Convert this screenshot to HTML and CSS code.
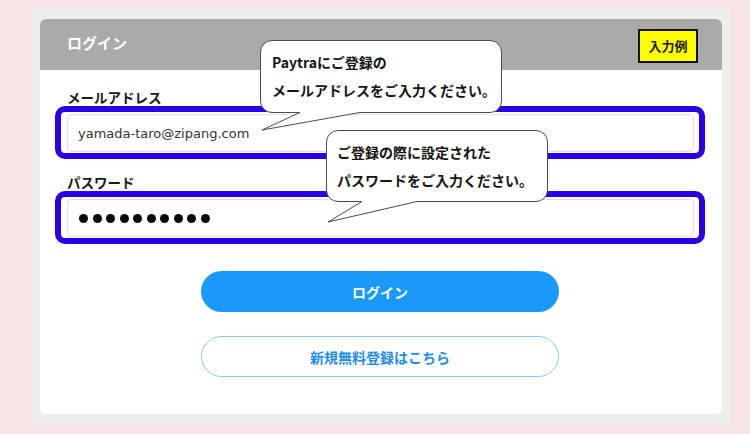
FILE: index.html
```html
<!DOCTYPE html>
<html lang="ja">
<head>
<meta charset="utf-8">
<title>ログイン</title>
<link rel="stylesheet" href="styles.css">
</head>
<body>
<div class="frame">
  <div class="card">
    <div class="card-head">
      <h1 class="title">ログイン</h1>
      <span class="badge">入力例</span>
    </div>
    <div class="card-body">
      <div class="field">
        <div class="label">メールアドレス</div>
        <div class="hl">
          <div class="input"><span class="email">yamada-taro@zipang.com</span></div>
        </div>
      </div>
      <div class="field">
        <div class="label">パスワード</div>
        <div class="hl">
          <div class="input">
            <span class="dots">
              <i class="dot"></i><i class="dot"></i><i class="dot"></i><i class="dot"></i><i class="dot"></i><i class="dot"></i><i class="dot"></i><i class="dot"></i><i class="dot"></i><i class="dot"></i>
            </span>
          </div>
        </div>
      </div>
      <div class="actions">
        <div class="btn btn-primary">ログイン</div>
        <div class="btn btn-outline">新規無料登録はこちら</div>
      </div>
    </div>

    <div class="bubble bubble-mail">
      <p class="bubble-text">Paytraにご登録の<br>メールアドレスをご入力ください。</p>
      <svg class="tail" width="242" height="100" viewBox="0 0 242 100">
        <polygon points="40,69.5 100,69.5 100,72.5 2,90 40,72.5" fill="#fff"/>
        <polyline points="40,72.5 2,90 100,72.5" fill="none" stroke="#4a4a4a" stroke-width="1"/>
      </svg>
    </div>

    <div class="bubble bubble-pass">
      <p class="bubble-text">ご登録の際に設定された<br>パスワードをご入力ください。</p>
      <svg class="tail" width="222" height="100" viewBox="0 0 222 100">
        <polygon points="36,68.5 91,68.5 91,71.5 2,92 36,71.5" fill="#fff"/>
        <polyline points="36,71.5 2,92 91,71.5" fill="none" stroke="#4a4a4a" stroke-width="1"/>
      </svg>
    </div>
  </div>
</div>
</body>
</html>
```

FILE: styles.css
```css
* { box-sizing: border-box; }

html, body {
  margin: 0;
  padding: 0;
}

body {
  width: 750px;
  height: 434px;
  background: #f7e4e4;
  font-family: "Noto Sans CJK JP", "Noto Sans", sans-serif;
  color: #222;
  overflow: hidden;
  padding: 8px 19px 9px 32px;
}

.frame {
  width: 699px;
  height: 417px;
  background: #eeeeee;
  padding: 11px 9px 11px 8px;
}

.card {
  position: relative;
  width: 682px;
  height: 395px;
  background: #ffffff;
  border-radius: 6px;
}

.card-head {
  height: 51px;
  background: #aaaaaa;
  border-radius: 6px 6px 0 0;
  display: flex;
  align-items: flex-start;
  justify-content: space-between;
  padding: 0 24px 0 27px;
}

.title {
  margin: 0;
  font-size: 15px;
  font-weight: 700;
  line-height: 20px;
  color: #ffffff;
  padding-top: 14px;
}

.badge {
  margin-top: 10px;
  width: 60px;
  height: 34px;
  background: #ffff00;
  border: 2px solid #111;
  font-size: 13px;
  font-weight: 700;
  line-height: 30px;
  text-align: center;
  color: #222;
}

.card-body {
  padding: 18px 17px 0 15px;
  display: flex;
  flex-direction: column;
}

.field {
  display: flex;
  flex-direction: column;
}

.field + .field {
  margin-top: 14px;
}

.label {
  padding-left: 12px;
  font-size: 13.5px;
  font-weight: 700;
  line-height: 18px;
  color: #1a1a1a;
}

.hl {
  height: 53px;
  border: 6px solid #2a00e6;
  border-radius: 10px;
  padding: 2px 5px 1px 6px;
  background: #fff;
}

.input {
  height: 38px;
  border: 1px solid #e1e1e1;
  border-radius: 4px;
  background: #fff;
  box-shadow: inset 0 0 2px #eeeeee;
  display: flex;
  align-items: center;
  padding-left: 10px;
}

.email {
  font-family: "DejaVu Sans", "Noto Sans", sans-serif;
  font-size: 13px;
  color: #333;
}

.dots {
  display: flex;
  gap: 4.5px;
  padding-left: 1px;
}

.dot {
  display: block;
  width: 9px;
  height: 9px;
  border-radius: 50%;
  background: #0a0a0a;
}

.actions {
  display: flex;
  flex-direction: column;
  align-items: center;
  gap: 24px;
  margin-top: 27px;
}

.btn {
  width: 358px;
  height: 41px;
  border-radius: 21px;
  display: flex;
  align-items: center;
  justify-content: center;
  font-size: 14px;
  font-weight: 700;
}

.btn-primary {
  background: #1a99fb;
  color: #ffffff;
}

.btn-outline {
  background: #ffffff;
  border: 1px solid #8cc3ef;
  color: #1f8ce6;
}

.bubble {
  position: absolute;
  background: #ffffff;
  border: 1px solid #4a4a4a;
  border-radius: 12px;
}

.bubble-mail {
  left: 220px;
  top: 21px;
  width: 242px;
  height: 73px;
  padding: 7px 0 0 11px;
}

.bubble-pass {
  left: 286px;
  top: 111px;
  width: 222px;
  height: 72px;
  padding: 7px 0 0 10px;
}

.bubble-text {
  margin: 0;
  font-size: 14px;
  font-weight: 700;
  line-height: 28px;
  color: #141414;
  white-space: nowrap;
}

.tail {
  position: absolute;
  left: -1px;
  top: -1px;
  overflow: visible;
}
```
